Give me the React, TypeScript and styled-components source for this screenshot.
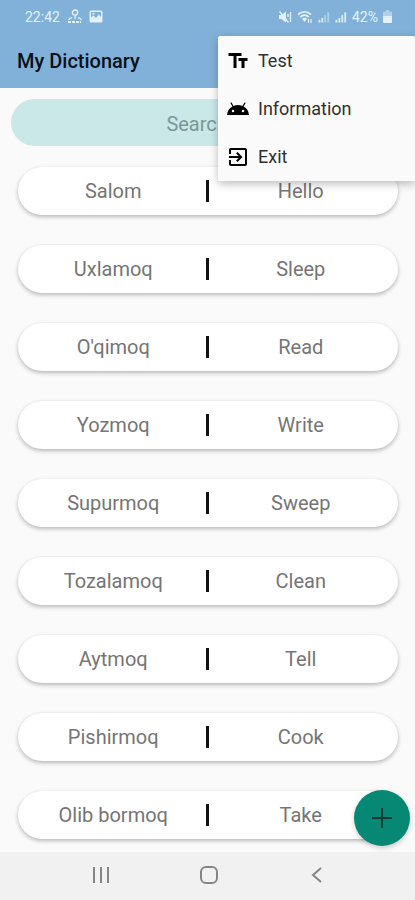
import React from "react";
import styled, { createGlobalStyle } from "styled-components";

const GlobalStyle = createGlobalStyle`
  *, *::before, *::after { box-sizing: border-box; }
  body {
    margin: 0;
    background: #fafafa;
    font-family: Roboto, "Liberation Sans", sans-serif;
  }
  button, input { font: inherit; }
`;

const Screen = styled.div`
  position: relative;
  display: flex;
  flex-direction: column;
  min-height: 100vh;
  background: #fafafa;
`;

const Header = styled.header`
  background: #81b1d9;
`;

const StatusBar = styled.div`
  display: flex;
  align-items: center;
  justify-content: space-between;
  height: 33px;
  padding: 0 23px 0 25px;
  color: #e3f2fa;
  font-size: 14px;
  line-height: 16px;
`;

const StatusGroup = styled.div<{ $gap: number }>`
  display: flex;
  align-items: center;
  gap: ${(p) => p.$gap}px;
`;

const Title = styled.h1`
  display: flex;
  align-items: center;
  height: 55px;
  margin: 0;
  padding: 0 17px;
  color: #0b1119;
  font-size: 20px;
  font-weight: 500;
  line-height: 24px;
`;

const Main = styled.main`
  position: relative;
  flex: 1;
  padding: 11px 11px 13px;
`;

const SearchInput = styled.input`
  display: block;
  width: 100%;
  height: 47px;
  padding: 2px 16px 0;
  border: 0;
  border-radius: 24px;
  background: #c9e8e7;
  color: #4c6463;
  font-size: 20px;
  text-align: center;

  &::placeholder {
    color: #7f9695;
    opacity: 1;
  }
`;

const WordList = styled.ul`
  display: flex;
  flex-direction: column;
  gap: 30px;
  margin: 21px 6px 0 7px;
  padding: 0;
  list-style: none;
`;

const WordCard = styled.li`
  display: grid;
  grid-template-columns: 1fr 3px 1fr;
  align-items: center;
  height: 48px;
  padding: 0 5px 0 3px;
  border-radius: 24px;
  background: #fff;
  box-shadow: 0 2px 4px rgba(0, 0, 0, 0.26), 0 0 2px rgba(0, 0, 0, 0.05);
`;

const Word = styled.span`
  color: #757575;
  font-size: 20px;
  line-height: 24px;
  text-align: center;
`;

const Divider = styled.span`
  height: 22px;
  background: #111;
`;

const AddButton = styled.button`
  position: absolute;
  right: 5px;
  bottom: 6px;
  display: grid;
  place-items: center;
  width: 56px;
  height: 56px;
  padding: 0;
  border: 0;
  border-radius: 50%;
  background: #068875;
  color: #0b3a35;
  box-shadow: 0 2px 5px rgba(0, 0, 0, 0.2);
`;

const Menu = styled.div`
  position: absolute;
  top: 36px;
  right: 0;
  display: flex;
  flex-direction: column;
  width: 197px;
  padding-top: 1px;
  background: #fafafa;
  border-radius: 2px 2px 0 2px;
  box-shadow: 0 3px 8px rgba(0, 0, 0, 0.26);
`;

const MenuItem = styled.button`
  display: flex;
  align-items: center;
  gap: 8px;
  height: 48px;
  padding: 0 8px;
  border: 0;
  background: transparent;
  color: #303030;
  font-size: 18px;
  line-height: 24px;
  text-align: left;

  svg { color: #000; }
`;

const NavBar = styled.nav`
  display: flex;
  align-items: center;
  justify-content: center;
  gap: 84px;
  height: 48px;
  padding: 0 0 2px 2px;
  background: #f1f1f1;
`;

const NavButton = styled.button`
  display: grid;
  place-items: center;
  width: 24px;
  height: 24px;
  padding: 0;
  border: 0;
  background: transparent;
  color: #858585;
`;

const MENU = [
  {
    label: "Test",
    path: "M2.5 4v3h5v12h3V7h5V4h-13zm19 5h-9v3h3v7h3v-7h3V9z",
  },
  {
    label: "Information",
    path: "M17.6 9.48l1.84-3.18c.16-.31.04-.69-.26-.85-.29-.15-.65-.06-.83.22l-1.88 3.24a11.46 11.46 0 0 0-8.94 0L5.65 5.67a.643.643 0 0 0-.87-.2c-.28.18-.37.54-.22.83L6.4 9.48A10.78 10.78 0 0 0 1 18h22a10.78 10.78 0 0 0-5.4-8.52zM7 15.25a1.25 1.25 0 1 1 0-2.5 1.25 1.25 0 0 1 0 2.5zm10 0a1.25 1.25 0 1 1 0-2.5 1.25 1.25 0 0 1 0 2.5z",
  },
  {
    label: "Exit",
    path: "M10.09 15.59L11.5 17l5-5-5-5-1.41 1.41L12.67 11H3v2h9.67l-2.58 2.59zM19 3H5c-1.11 0-2 .9-2 2v4h2V5h14v14H5v-4H3v4c0 1.1.89 2 2 2h14c1.1 0 2-.9 2-2V5c0-1.1-.9-2-2-2z",
  },
];

const WORDS: [string, string][] = [
  ["Salom", "Hello"],
  ["Uxlamoq", "Sleep"],
  ["O'qimoq", "Read"],
  ["Yozmoq", "Write"],
  ["Supurmoq", "Sweep"],
  ["Tozalamoq", "Clean"],
  ["Aytmoq", "Tell"],
  ["Pishirmoq", "Cook"],
  ["Olib bormoq", "Take"],
];

const LocationIcon = () => (
  <svg width="15" height="15" viewBox="0 0 15 15" fill="none" stroke="currentColor" strokeWidth="1.3" aria-hidden="true">
    <circle cx="8" cy="3.6" r="2.6" />
    <path d="M8 6.2v4M5 8.6c-2 .5-3 1.3-3.5 2.4M11 8.6c2 .5 3 1.3 3.5 2.4" />
    <path d="M1 13h13" strokeWidth="2" strokeDasharray="3 1" />
  </svg>
);

const PictureIcon = () => (
  <svg width="14" height="13" viewBox="0 0 14 13" aria-hidden="true">
    <path
      fill="currentColor"
      fillRule="evenodd"
      d="M2 .5h10a1.5 1.5 0 0 1 1.5 1.5v9A1.5 1.5 0 0 1 12 12.5H2A1.5 1.5 0 0 1 .5 11V2A1.5 1.5 0 0 1 2 .5zM2 2v5.5l2.5-2 2.5 2.5 3-3.5L12 7V2H2z"
    />
    <circle cx="4.5" cy="3.7" r="1" fill="currentColor" />
  </svg>
);

const MuteIcon = () => (
  <svg width="14" height="14" viewBox="0 0 14 14" aria-hidden="true">
    <path d="M1 5h2.5L8 1.5v11L3.5 9H1z" fill="currentColor" />
    <path d="M1.5 1.5l9 11M10 4v3M12.5 2v10" stroke="currentColor" strokeWidth="1.3" fill="none" />
  </svg>
);

const WifiIcon = () => (
  <svg width="16" height="14" viewBox="0 0 16 14" fill="none" stroke="currentColor" aria-hidden="true">
    <path d="M1 4.5c4-3.6 9-3.6 13 0M3.3 7c2.7-2.3 5.7-2.3 8.4 0" strokeWidth="1.7" />
    <path d="M5 8.8c1.6-1.3 3.5-1.3 5 0L7.6 12z" fill="currentColor" stroke="none" />
    <path d="M11.5 9v4M14 9v4" strokeWidth="1.2" />
  </svg>
);

const SignalIcon = ({ level }: { level: number }) => (
  <svg width="12" height="12" viewBox="0 0 13 12" stroke="currentColor" strokeWidth="2" aria-hidden="true">
    {[3, 5, 8, 11].map((h, i) => (
      <path key={h} d={`M${1.5 + i * 3.2} 12v-${h}`} opacity={i < level ? 0.9 : 0.45} />
    ))}
  </svg>
);

const BatteryIcon = () => (
  <svg width="9" height="13" viewBox="0 0 9 13" fill="currentColor" aria-hidden="true">
    <path d="M3 0h3v1.5h2a1 1 0 0 1 1 1V7H0V2.500a1 1 0 0 1 1-1h2z" opacity=".5" />
    <path d="M0 6h9v6a1 1 0 0 1-1 1H1a1 1 0 0 1-1-1z" />
  </svg>
);

export default function App() {
  return (
    <>
      <GlobalStyle />
      <Screen>
        <Header>
          <StatusBar>
            <StatusGroup $gap={7}>
              <span>22:42</span>
              <LocationIcon />
              <PictureIcon />
            </StatusGroup>
            <StatusGroup $gap={5}>
              <MuteIcon />
              <WifiIcon />
              <SignalIcon level={2} />
              <SignalIcon level={4} />
              <span>42%</span>
              <BatteryIcon />
            </StatusGroup>
          </StatusBar>
          <Title>My Dictionary</Title>
        </Header>

        <Main>
          <SearchInput type="text" aria-label="Search" placeholder="Search ..." />
          <WordList>
            {WORDS.map(([uzbek, english]) => (
              <WordCard key={uzbek}>
                <Word>{uzbek}</Word>
                <Divider />
                <Word>{english}</Word>
              </WordCard>
            ))}
          </WordList>
          <AddButton type="button" aria-label="Add word">
            <svg width="24" height="24" viewBox="0 0 24 24" stroke="currentColor" strokeWidth="2" aria-hidden="true">
              <path d="M12 2v20M2 12h20" />
            </svg>
          </AddButton>
        </Main>

        <NavBar aria-label="System">
          <NavButton type="button" aria-label="Recent apps">
            <svg width="24" height="24" viewBox="0 0 24 24" stroke="currentColor" strokeWidth="2" aria-hidden="true">
              <path d="M5 4v16M12 4v16M19 4v16" />
            </svg>
          </NavButton>
          <NavButton type="button" aria-label="Home">
            <svg width="24" height="24" viewBox="0 0 24 24" fill="none" stroke="currentColor" strokeWidth="2" aria-hidden="true">
              <rect x="4" y="4" width="16" height="16" rx="5" />
            </svg>
          </NavButton>
          <NavButton type="button" aria-label="Back">
            <svg width="24" height="24" viewBox="0 0 24 24" fill="none" stroke="currentColor" strokeWidth="2" aria-hidden="true">
              <path d="M16 5l-8 7 8 7" />
            </svg>
          </NavButton>
        </NavBar>

        <Menu role="menu">
          {MENU.map(({ label, path }) => (
            <MenuItem key={label} type="button" role="menuitem">
              <svg width="24" height="24" viewBox="0 0 24 24" fill="currentColor" aria-hidden="true">
                <path d={path} />
              </svg>
              {label}
            </MenuItem>
          ))}
        </Menu>
      </Screen>
    </>
  );
}
